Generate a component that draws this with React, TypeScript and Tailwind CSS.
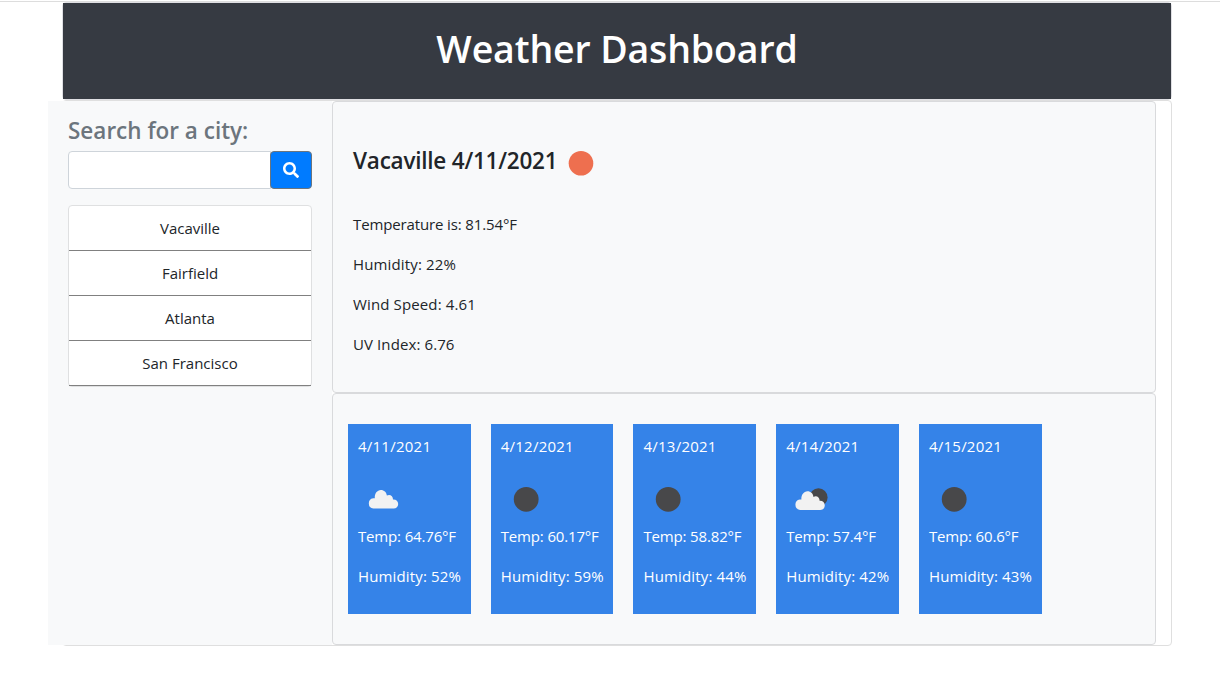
import type { ReactNode } from "react";

type IconKind = "cloud" | "night" | "nightCloud";

const cities = ["Vacaville", "Fairfield", "Atlanta", "San Francisco"];

const forecast: { date: string; icon: IconKind; temp: string; humidity: string }[] = [
  { date: "4/11/2021", icon: "cloud", temp: "64.76", humidity: "52" },
  { date: "4/12/2021", icon: "night", temp: "60.17", humidity: "59" },
  { date: "4/13/2021", icon: "night", temp: "58.82", humidity: "44" },
  { date: "4/14/2021", icon: "nightCloud", temp: "57.4", humidity: "42" },
  { date: "4/15/2021", icon: "night", temp: "60.6", humidity: "43" },
];

const CLOUD =
  "M5.2 18.6 A5.2 5.2 0 0 1 5 8.3 C5.5 8.1 6.1 8.1 6.6 8.2 C6.3 3.6 9 0 12.7 0 C15.8 0 18.3 2.2 18.7 5.6 C21.5 3.9 25 5.9 24.8 9.5 C27.9 9.3 30 11.4 30 14.1 C30 16.7 28.1 18.6 25.5 18.6 Z";

function WeatherIcon({ kind }: { kind: IconKind }) {
  return (
    <svg width="50" height="50" viewBox="0 0 50 50" className="block">
      {kind === "night" && <circle cx="25.2" cy="25.3" r="12.4" fill="#48484a" />}
      {kind === "cloud" && <path d={CLOUD} fill="#f2f2f2" transform="translate(10.2 16)" />}
      {kind === "nightCloud" && (
        <>
          <circle cx="32.5" cy="23.4" r="9.1" fill="#48484a" />
          <path d={CLOUD} fill="#f2f2f2" transform="translate(8.8 17.3)" />
        </>
      )}
    </svg>
  );
}

function Panel({ children, className }: { children: ReactNode; className: string }) {
  return (
    <section className={`rounded border border-[#d9dadc] bg-[#f8f9fa] ${className}`}>{children}</section>
  );
}

export default function App() {
  return (
    <div className="mt-px h-[697px] overflow-hidden border-t border-[#dddddd] bg-white pr-[48px] pl-[62px] font-['Open_Sans','Noto_Sans',sans-serif] text-[15px] leading-6 text-[#212529]">
      <header className="h-[98px] w-[1110px] rounded border border-[#dfdfe3]">
        <div className="flex h-[96px] justify-center bg-[#363a42]">
          <h1 className="pt-[16px] text-[37.5px] leading-[60px] font-semibold tracking-[-0.15px] whitespace-nowrap text-white">
            Weather Dashboard
          </h1>
        </div>
      </header>

      <main className="h-[546px] w-[1110px] rounded border border-[#dfdfdf]">
        <div className="-ml-[15px] flex h-[544px]">
          <aside className="w-[284px] shrink-0 bg-[#f8f9fa] px-5 pt-[15px]">
            <h2 className="text-[22.5px] leading-[29px] font-semibold whitespace-nowrap text-[#6c757d]">
              Search for a city:
            </h2>
            <form className="mt-[6px] flex h-[38px]">
              <input
                aria-label="City"
                className="w-[203px] rounded-l border border-[#ced4da] bg-white px-3 outline-none"
              />
              <button
                type="button"
                aria-label="Search"
                className="-ml-px flex w-[42px] items-center justify-center rounded border border-[#6c757d] bg-[#007bff]"
              >
                <svg width="16" height="16" viewBox="0 0 512 512" fill="#fff">
                  <path d="M505 442.7L405.3 343c-4.5-4.5-10.6-7-17-7H372c27.6-35.3 44-79.7 44-128C416 93.1 322.9 0 208 0S0 93.1 0 208s93.1 208 208 208c48.3 0 92.7-16.4 128-44v16.3c0 6.4 2.5 12.5 7 17l99.7 99.7c9.4 9.4 24.6 9.4 33.9 0l28.3-28.3c9.4-9.4 9.4-24.6.1-34zM208 336c-70.7 0-128-57.2-128-128 0-70.7 57.2-128 128-128 70.7 0 128 57.2 128 128 0 70.7-57.2 128-128 128z" />
                </svg>
              </button>
            </form>
            <ul className="mt-4 h-[182px] rounded border border-[#dfe0e1] bg-white">
              {cities.map((city) => (
                <li key={city} className="flex h-[45px] items-center justify-center border-b border-[#808080]">
                  {city}
                </li>
              ))}
            </ul>
          </aside>

          <div className="w-[824px] shrink-0">
            <Panel className="h-[292px] px-5 pt-[36px]">
              <div className="flex h-[50px] items-start">
                <h3 className="pt-[8px] text-[22.5px] leading-[29px] font-semibold tracking-[-0.22px] whitespace-nowrap">
                  Vacaville 4/11/2021
                </h3>
                <svg width="50" height="50" viewBox="0 0 50 50" className="-ml-px">
                  <circle cx="25" cy="25.3" r="12.3" fill="#ee6f4f" />
                </svg>
              </div>
              <div className="flex flex-col items-start gap-4 pt-[24px]">
                <p className="tracking-[-0.13px]">Temperature is: 81.54°F</p>
                <p className="tracking-[0.15px]">Humidity: 22%</p>
                <p className="tracking-[0.13px]">Wind Speed: 4.61</p>
                <p className="tracking-[0.1px]">UV Index: 6.76</p>
              </div>
            </Panel>
            <Panel className="flex h-[252px] gap-5 pt-[30px] pl-[15px]">
              {forecast.map((day) => (
                <article
                  key={day.date}
                  className="flex h-[190px] w-[122.74px] shrink-0 flex-col items-start bg-[#3583e8] px-[10px] pt-[10px] whitespace-nowrap text-white"
                >
                  <p className="tracking-[0.24px]">{day.date}</p>
                  <div className="mt-4 h-[50px]">
                    <WeatherIcon kind={day.icon} />
                  </div>
                  <p className="tracking-[-0.16px]">Temp: {day.temp}°F</p>
                  <p className="mt-4 tracking-[0.15px]">Humidity: {day.humidity}%</p>
                </article>
              ))}
            </Panel>
          </div>
        </div>
      </main>
    </div>
  );
}
